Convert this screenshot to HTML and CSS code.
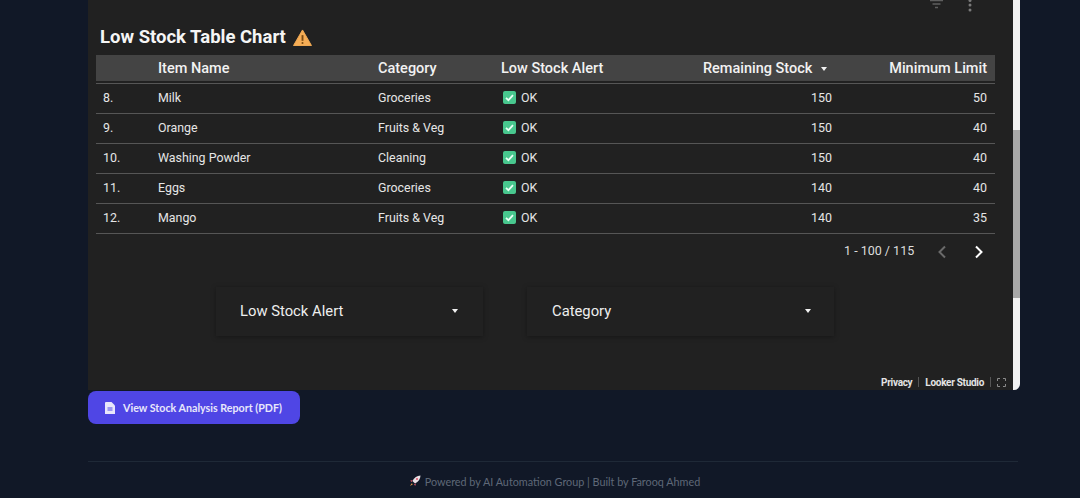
FILE: index.html
```html
<!DOCTYPE html>
<html lang="en">
<head>
    <meta charset="UTF-8">
    <meta name="viewport" content="width=device-width, initial-scale=1.0">
    <title>Low Stock Table Chart</title>
    <link rel="stylesheet" href="styles.css">
</head>
<body>
    <div class="page">
        <div class="frame">
            <div class="report">
                <div class="toolbar">
                    <svg class="tool-icon" width="13" height="10" viewBox="0 0 13 10"><path d="M0 1.500h13M2.500 5h8M5 8.500h3" stroke="#5f5f5f" stroke-width="1.5"/></svg>
                    <svg class="tool-icon" width="4" height="14" viewBox="0 0 4 14"><circle cx="2" cy="1.500" r="1.500" fill="#7a7a7a"/><circle cx="2" cy="6" r="1.500" fill="#7a7a7a"/><circle cx="2" cy="11" r="1.500" fill="#7a7a7a"/></svg>
                </div>

                <h1 class="title">Low Stock Table Chart
                    <svg class="warn" width="19" height="17" viewBox="0 0 20 18"><path d="M10 1 19.500 17.500H.5z" fill="#f6ad55" stroke="#f6ad55" stroke-linejoin="round"/><path d="M10 6.500v6" stroke="#7a4a12" stroke-width="2"/><circle cx="10" cy="14.800" r="1.100" fill="#7a4a12"/></svg>
                </h1>

                <table class="stock">
                    <thead>
                        <tr>
                            <th class="col-num"></th>
                            <th class="col-name">Item Name</th>
                            <th class="col-cat">Category</th>
                            <th class="col-alert">Low Stock Alert</th>
                            <th class="col-rem">Remaining Stock <span class="sort"></span></th>
                            <th class="col-min">Minimum Limit</th>
                        </tr>
                    </thead>
                    <tbody>
                        <tr>
                            <td>8.</td><td>Milk</td><td>Groceries</td>
                            <td><span class="ok"><svg width="13" height="13" viewBox="0 0 13 13"><rect width="13" height="13" rx="2" fill="#48c78e"/><path d="M3 6.800 5.400 9.200 10 4.200" fill="none" stroke="#eafff5" stroke-width="1.800"/></svg>OK</span></td>
                            <td class="num">150</td><td class="num">50</td>
                        </tr>
                        <tr>
                            <td>9.</td><td>Orange</td><td>Fruits &amp; Veg</td>
                            <td><span class="ok"><svg width="13" height="13" viewBox="0 0 13 13"><rect width="13" height="13" rx="2" fill="#48c78e"/><path d="M3 6.800 5.400 9.200 10 4.200" fill="none" stroke="#eafff5" stroke-width="1.800"/></svg>OK</span></td>
                            <td class="num">150</td><td class="num">40</td>
                        </tr>
                        <tr>
                            <td>10.</td><td>Washing Powder</td><td>Cleaning</td>
                            <td><span class="ok"><svg width="13" height="13" viewBox="0 0 13 13"><rect width="13" height="13" rx="2" fill="#48c78e"/><path d="M3 6.800 5.400 9.200 10 4.200" fill="none" stroke="#eafff5" stroke-width="1.800"/></svg>OK</span></td>
                            <td class="num">150</td><td class="num">40</td>
                        </tr>
                        <tr>
                            <td>11.</td><td>Eggs</td><td>Groceries</td>
                            <td><span class="ok"><svg width="13" height="13" viewBox="0 0 13 13"><rect width="13" height="13" rx="2" fill="#48c78e"/><path d="M3 6.800 5.400 9.200 10 4.200" fill="none" stroke="#eafff5" stroke-width="1.800"/></svg>OK</span></td>
                            <td class="num">140</td><td class="num">40</td>
                        </tr>
                        <tr>
                            <td>12.</td><td>Mango</td><td>Fruits &amp; Veg</td>
                            <td><span class="ok"><svg width="13" height="13" viewBox="0 0 13 13"><rect width="13" height="13" rx="2" fill="#48c78e"/><path d="M3 6.800 5.400 9.200 10 4.200" fill="none" stroke="#eafff5" stroke-width="1.800"/></svg>OK</span></td>
                            <td class="num">140</td><td class="num">35</td>
                        </tr>
                    </tbody>
                </table>

                <div class="pager">
                    <span>1 - 100 / 115</span>
                    <svg class="chev-prev" width="10" height="14" viewBox="0 0 10 14"><path d="M8 1.500 2.500 7 8 12.500" fill="none" stroke="#6a6a6a" stroke-width="2"/></svg>
                    <svg class="chev-next" width="10" height="14" viewBox="0 0 10 14"><path d="M2 1.500 7.500 7 2 12.500" fill="none" stroke="#fff" stroke-width="2"/></svg>
                </div>

                <div class="filters">
                    <div class="filter filter-alert">Low Stock Alert <span class="sort"></span></div>
                    <div class="filter filter-cat">Category <span class="sort"></span></div>
                </div>

                <div class="report-foot">
                    <span>Privacy</span>
                    <span class="sep"></span>
                    <span>Looker Studio</span>
                    <span class="sep"></span>
                    <svg width="9" height="9" viewBox="0 0 9 9"><path d="M.5 3V.5H3M6 .5h2.500V3M8.500 6v2.500H6M3 8.500H.5V6" fill="none" stroke="#8a8a8a"/></svg>
                </div>
            </div>
            <div class="scrollbar"><div class="thumb"></div></div>
        </div>

        <a class="pdf-btn" href="#">
            <svg width="10" height="12" viewBox="0 0 10 12"><path d="M1 0h5.500L10 3.500V12H0V1a1 1 0 0 1 1-1z" fill="#e8e7fb"/><path d="M2.500 6h5M2.500 8h5" stroke="#4f46e5"/></svg>
            View Stock Analysis Report (PDF)
        </a>

        <footer class="site-foot">
            <svg width="12" height="12" viewBox="0 0 12 12"><path d="M11.500.5C8 .7 5.200 2.500 3.400 6l2.600 2.600C9.500 6.800 11.300 4 11.500.5z" fill="#e8dfe4"/><circle cx="8" cy="4" r="1" fill="#e0556b"/><path d="M3.500 5 1 5.800 2.800 7zM7 8.500 6.200 11 5 9.200z" fill="#e0556b"/><path d="M2.800 8.200 1 11l2.800-1.800z" fill="#f0a14a"/></svg>
            Powered by AI Automation Group | Built by Farooq Ahmed
        </footer>
    </div>
</body>
</html>
```

FILE: styles.css
```css
* {
    box-sizing: border-box;
}

html, body {
    height: 100%;
    overflow: hidden;
}

body {
    margin: 0;
    background-color: #111827;
    font-family: Roboto, "Liberation Sans", sans-serif;
}

.page {
    width: 930px;
    margin-left: 88px;
}

.frame {
    display: flex;
    width: 932px;
    height: 390px;
    border-bottom-right-radius: 6px;
    overflow: hidden;
}

.report {
    display: flex;
    flex-direction: column;
    width: 925px;
    background-color: #212121;
    color: #eeeeee;
}

.scrollbar {
    width: 7px;
    background-color: #f1f1f1;
    padding-top: 130px;
}

.thumb {
    height: 168px;
    background-color: #a8a8a8;
}

.toolbar {
    display: flex;
    align-items: flex-start;
    justify-content: flex-end;
    gap: 25px;
    height: 24px;
    padding-right: 41px;
}

.tool-icon {
    margin-top: -1px;
}

.title {
    display: flex;
    align-items: center;
    gap: 7px;
    height: 25px;
    margin: 0 0 6px 12px;
    font-size: 18.5px;
    font-weight: 700;
    color: #f5f5f5;
}

.warn {
    margin-top: 2px;
}

.stock {
    width: 899px;
    margin-left: 8px;
    border-collapse: separate;
    border-spacing: 0;
    table-layout: fixed;
    font-size: 12.4px;
}

.stock th {
    height: 29px;
    padding: 0 0 1px;
    background: linear-gradient(#444444 26px, transparent 26px);
    font-size: 14.5px;
    font-weight: 500;
    text-align: left;
    color: #f2f2f2;
    border-bottom: 1px solid #565656;
}

.stock td {
    height: 30px;
    padding: 0 0 2px;
    border-bottom: 1px solid #565656;
    color: #e6e6e6;
}

.stock td:first-child {
    padding-left: 7px;
}

.col-num { width: 62px; }
.col-name { width: 220px; }
.col-cat { width: 123px; }
.col-alert { width: 160px; }
.col-rem { width: 175px; }

.stock th.col-rem {
    text-align: right;
    padding-right: 9px;
}

.stock th.col-min,
.stock td.num {
    text-align: right;
    padding-right: 8px;
}

.stock td:nth-child(5) {
    padding-right: 4px;
}

.sort {
    display: inline-block;
    width: 0;
    height: 0;
    margin-left: 5px;
    vertical-align: middle;
    border-left: 3.5px solid transparent;
    border-right: 3.5px solid transparent;
    border-top: 4px solid #f2f2f2;
}

.ok {
    display: flex;
    align-items: center;
    gap: 5px;
    padding-left: 2px;
}

.pager {
    display: flex;
    align-items: center;
    height: 32px;
    padding-left: 756px;
    font-size: 12.5px;
    color: #dddddd;
}

.chev-prev {
    margin-left: 23px;
    margin-top: 3px;
}

.chev-next {
    margin-left: 27px;
    margin-top: 3px;
}

.filters {
    display: flex;
    gap: 44px;
    margin: 21px 0 0 128px;
}

.filter {
    display: flex;
    align-items: center;
    justify-content: space-between;
    height: 49px;
    padding: 0 25px 1px 24px;
    font-size: 14.8px;
    color: #eeeeee;
    background-color: #212121;
    box-shadow: 0 1px 5px rgba(0, 0, 0, 0.35);
}

.filter-alert { width: 267px; }
.filter-cat { width: 307px; padding: 0 23px 1px 25px; }

.report-foot {
    display: flex;
    align-items: center;
    justify-content: flex-end;
    gap: 6px;
    margin-top: auto;
    height: 16px;
    padding-right: 7px;
    font-size: 10px;
    font-weight: 700;
    letter-spacing: -0.3px;
    color: #e4e4e4;
}

.sep {
    width: 1px;
    height: 10px;
    background-color: #555555;
}

.pdf-btn {
    display: flex;
    align-items: center;
    gap: 8px;
    width: 212px;
    height: 33px;
    margin-top: 1px;
    padding-left: 17px;
    border-radius: 8px;
    background-color: #4f46e5;
    color: #e8e7fb;
    font-family: Lato, sans-serif;
    font-size: 10.7px;
    font-weight: 700;
    text-decoration: none;
}

.site-foot {
    display: flex;
    align-items: center;
    justify-content: center;
    gap: 4px;
    height: 39px;
    margin-top: 37px;
    padding-left: 3px;
    border-top: 1px solid #1f2937;
    font-family: Lato, sans-serif;
    font-size: 10.8px;
    color: #5f6878;
}
```
